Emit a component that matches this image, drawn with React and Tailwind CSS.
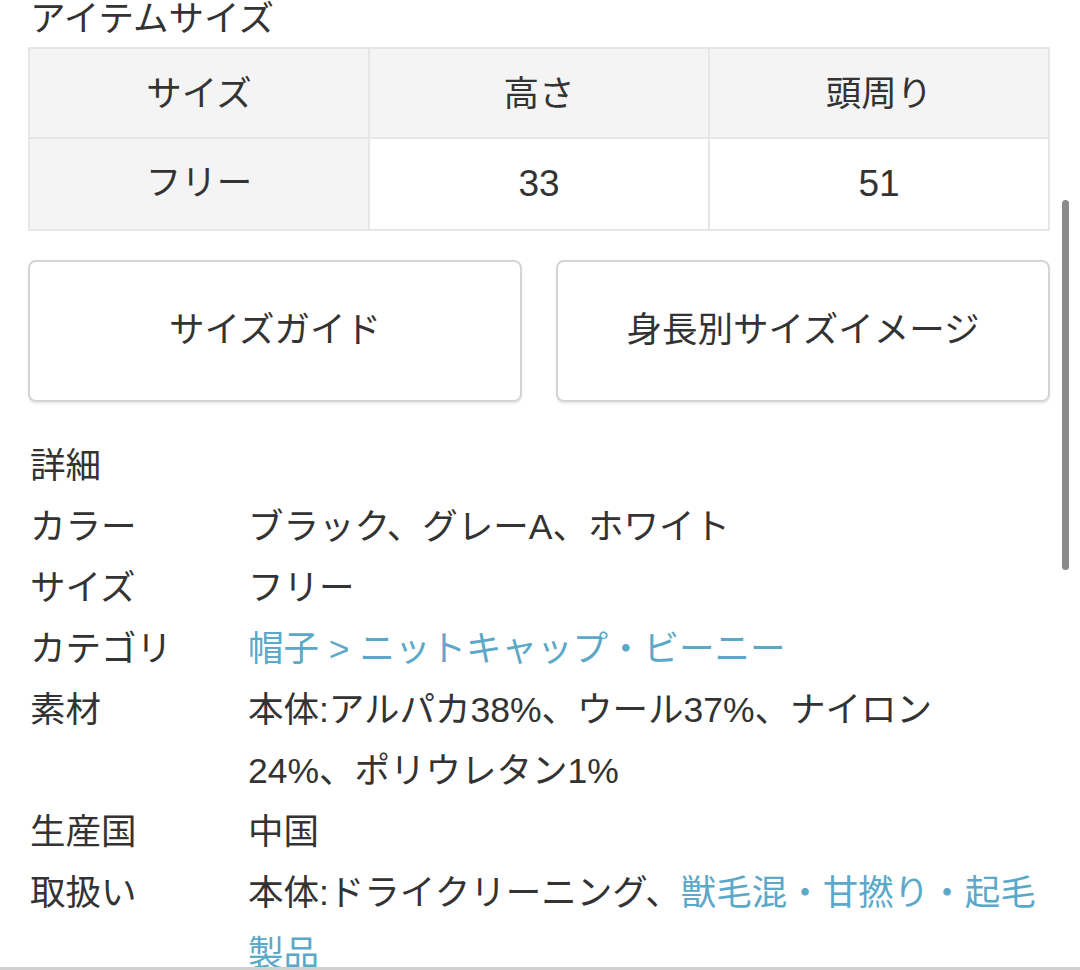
import React from "react";

const font = {
  fontFamily: '"Liberation Sans", "Noto Sans CJK JP", sans-serif',
};

const details = [
  { label: "カラー", lines: [[{ t: "ブラック、グレーA、ホワイト" }]] },
  { label: "サイズ", lines: [[{ t: "フリー" }]] },
  {
    label: "カテゴリ",
    lines: [[{ t: "帽子 > ニットキャップ・ビーニー", link: true }]],
  },
  {
    label: "素材",
    lines: [
      [{ t: "本体:アルパカ38%、ウール37%、ナイロン" }],
      [{ t: "24%、ポリウレタン1%" }],
    ],
  },
  { label: "生産国", lines: [[{ t: "中国" }]] },
  {
    label: "取扱い",
    lines: [
      [
        { t: "本体:ドライクリーニング、" },
        { t: "獣毛混・甘撚り・起毛", link: true },
      ],
      [{ t: "製品", link: true }],
    ],
  },
];

export default function App() {
  return (
    <div
      className="relative w-[1080px] h-[970px] overflow-hidden bg-white text-[#333] flex flex-col"
      style={font}
    >
      <div className="h-[967px] overflow-hidden pl-[28px] pr-[30px]">
        <h2 className="text-[35.5px] leading-[38px] pl-[2px]">アイテムサイズ</h2>

        <table className="mt-[9px] w-full border-collapse table-fixed text-[35.5px] border-2 border-[#e6e6e6]">
          <thead>
            <tr className="bg-[#f4f4f4] h-[90px]">
              <th className="font-normal border-2 border-[#e6e6e6] pt-[4px]">サイズ</th>
              <th className="font-normal border-2 border-[#e6e6e6] pt-[4px]">高さ</th>
              <th className="font-normal border-2 border-[#e6e6e6] pt-[4px]">頭周り</th>
            </tr>
          </thead>
          <tbody>
            <tr className="h-[92px]">
              <th className="font-normal bg-[#f4f4f4] border-2 border-[#e6e6e6]">フリー</th>
              <td className="text-center border-2 border-[#e6e6e6] text-[37px]">33</td>
              <td className="text-center border-2 border-[#e6e6e6] text-[37px]">51</td>
            </tr>
          </tbody>
        </table>

        <div className="mt-[29px] grid grid-cols-2 gap-[34px]">
          <button className="h-[142px] rounded-[8px] border-2 border-[#d4d4d4] shadow-[0_2px_2px_rgba(0,0,0,0.08)] bg-white text-[35.5px]">
            サイズガイド
          </button>
          <button className="h-[142px] rounded-[8px] border-2 border-[#d4d4d4] shadow-[0_2px_2px_rgba(0,0,0,0.08)] bg-white text-[35.5px]">
            身長別サイズイメージ
          </button>
        </div>

        <div className="mt-[34px] pl-[2px] text-[35.5px] leading-[61px]">
          <div>詳細</div>
          {details.map((d) => (
            <div key={d.label} className="flex">
              <div className="w-[218px] shrink-0">{d.label}</div>
              <div>
                {d.lines.map((line, i) => (
                  <div key={i} className="whitespace-nowrap">
                    {line.map((seg, j) => (
                      <span
                        key={j}
                        className={seg.link ? "text-[#5ba8c8]" : ""}
                      >
                        {seg.t}
                      </span>
                    ))}
                  </div>
                ))}
              </div>
            </div>
          ))}
        </div>
      </div>
      <div className="h-[3px] bg-[#cfcfcf]" />

      <div className="absolute left-[1062px] top-[200px] w-[7px] h-[370px] rounded-full bg-[#8a8a8a]" />
    </div>
  );
}
